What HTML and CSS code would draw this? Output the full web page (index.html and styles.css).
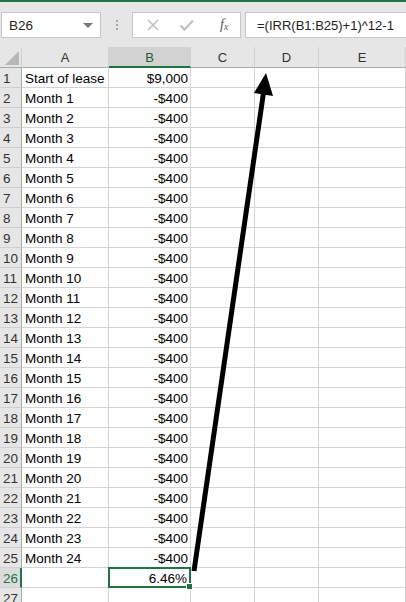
FILE: index.html
```html
<!DOCTYPE html>
<html lang="en">

<head>
    <meta charset="UTF-8">
    <meta name="viewport" content="width=device-width, initial-scale=1">
    <title>Lease IRR</title>
    <link rel="stylesheet" href="styles.css">
</head>

<body>

    <div class="top-edge"></div>

    <!-- Formula bar -->
    <div class="formula-bar">
        <div class="name-box">
            <span>B26</span>
            <svg class="caret" width="10" height="6" viewBox="0 0 10 6"><polygon points="0,0 10,0 5,5" fill="#777"/></svg>
        </div>
        <div class="grip"><i></i><i></i><i></i></div>
        <div class="fx-box">
            <svg width="14" height="14" viewBox="0 0 14 14"><path d="M2 2 L12 12 M12 2 L2 12" stroke="#c2c2c2" stroke-width="1.6" fill="none"/></svg>
            <svg width="16" height="14" viewBox="0 0 16 14"><path d="M1.5 7.5 L5.5 11.5 L14 2.5" stroke="#c2c2c2" stroke-width="2.4" fill="none"/></svg>
            <span class="fx">f<sub>x</sub></span>
        </div>
        <div class="formula">=(IRR(B1:B25)+1)^12-1</div>
    </div>

    <!-- Sheet -->
    <div class="sheet" id="sheet">
        <div class="corner"><svg width="14" height="14" viewBox="0 0 14 14"><polygon points="14,0 14,14 0,14" fill="#b7b7b7"/></svg></div>
        <div class="col-head">A</div>
        <div class="col-head active">B</div>
        <div class="col-head">C</div>
        <div class="col-head">D</div>
        <div class="col-head">E</div>
    </div>

    <svg class="arrow" width="406" height="602" viewBox="0 0 406 602">
        <line x1="194" y1="571" x2="263.6" y2="92" stroke="#000" stroke-width="5"/>
        <polygon points="266,73 273,96 254,93" fill="#000"/>
    </svg>

    <script>
        // Build the lease rows
        const sheet = document.getElementById("sheet");
        const rows = [["Start of lease", "$9,000"]];
        for (let i = 1; i <= 24; i++) {
            rows.push(["Month " + i, "-$400"]);
        }
        rows.push(["", "6.46%"]);
        rows.push(["", ""]);

        rows.forEach((row, i) => {
            const n = i + 1;
            const selected = n === 26;
            let html = `<div class="row-head${selected ? " active" : ""}">${n}</div>`;
            html += `<div class="cell">${row[0]}</div>`;
            html += `<div class="cell num${selected ? " selected" : ""}">${row[1]}</div>`;
            html += `<div class="cell"></div><div class="cell"></div><div class="cell"></div>`;
            sheet.insertAdjacentHTML("beforeend", html);
        });
    </script>

</body>

</html>
```

FILE: styles.css
```css
/* Spreadsheet view */
body {
    margin: 0;
    padding: 0;
    background-color: #e6e6e6;
    font-family: 'Liberation Sans', Arial, sans-serif;
    color: #000;
    width: 406px;
    height: 602px;
    overflow: hidden;
    position: relative;
}

.top-edge {
    height: 2px;
    background-color: #217346;
}

/* Formula bar */
.formula-bar {
    display: flex;
    align-items: center;
    height: 26px;
    margin-top: 10px;
    margin-bottom: 9px;
}

.name-box {
    width: 100px;
    height: 26px;
    box-sizing: border-box;
    margin-left: 1px;
    background-color: #fff;
    border: 1px solid #c6c6c6;
    display: flex;
    align-items: center;
    justify-content: space-between;
    padding: 0 7px 0 7px;
    font-size: 13.5px;
    color: #222;
}

.caret {
    margin-top: 1px;
}

.grip {
    width: 31px;
    display: flex;
    flex-direction: column;
    align-items: center;
    gap: 2px;
}

.grip i {
    width: 2px;
    height: 2px;
    background-color: #a8a8a8;
}

.fx-box {
    width: 109px;
    height: 26px;
    box-sizing: border-box;
    background-color: #fff;
    border: 1px solid #c6c6c6;
    display: flex;
    align-items: center;
    padding-left: 13px;
    gap: 19px;
}

.fx {
    font-family: 'Liberation Serif', 'Times New Roman', serif;
    font-style: italic;
    font-size: 14px;
    color: #555;
    margin-left: 6px;
}

.fx sub {
    font-size: 10px;
    vertical-align: -1px;
}

.formula {
    flex: 1;
    height: 26px;
    box-sizing: border-box;
    margin-left: 4px;
    background-color: #fff;
    border: 1px solid #c6c6c6;
    border-right: none;
    display: flex;
    align-items: center;
    padding-left: 11px;
    font-size: 13px;
    color: #222;
}

/* Grid */
.sheet {
    display: grid;
    grid-template-columns: 22px 87px 82px 64px 64px 1fr;
    grid-template-rows: 21px;
    grid-auto-rows: 20px;
    background-color: #fff;
}

.corner,
.col-head {
    background-color: #e6e6e6;
    border-right: 1px solid #d0d0d0;
    border-bottom: 1px solid #ababab;
    box-sizing: border-box;
}

.corner {
    display: flex;
    align-items: flex-end;
    justify-content: flex-end;
    padding: 0 2px 2px 0;
}

.col-head {
    display: flex;
    align-items: center;
    justify-content: center;
    font-size: 13px;
    color: #333;
    padding-top: 1px;
}

.col-head.active {
    background-color: #d2d2d2;
    border-bottom: 2px solid #217346;
    color: #1e5b38;
}

.row-head {
    background-color: #e6e6e6;
    border-right: 1px solid #ababab;
    border-bottom: 1px solid #d0d0d0;
    box-sizing: border-box;
    display: flex;
    align-items: flex-end;
    padding: 0 0 1px 3px;
    font-size: 13.5px;
    color: #333;
}

.row-head.active {
    background-color: #dcdcdc;
    border-right: 2px solid #217346;
    color: #217346;
}

.cell {
    border-right: 1px solid #d4d4d4;
    border-bottom: 1px solid #d4d4d4;
    box-sizing: border-box;
    display: flex;
    align-items: flex-end;
    padding: 0 2px 1px 3px;
    font-size: 13.5px;
    white-space: nowrap;
}

.cell.num {
    justify-content: flex-end;
    padding-right: 2px;
}

.cell.selected {
    position: relative;
    border: 2px solid #217346;
    margin: -1px 0 0 -1px;
    padding-bottom: 0;
}

.cell.selected::after {
    content: "";
    position: absolute;
    right: -4px;
    bottom: -4px;
    width: 5px;
    height: 5px;
    background-color: #217346;
    border: 1px solid #fff;
}

/* Arrow drawn over the sheet */
.arrow {
    position: absolute;
    top: 0;
    left: 0;
    pointer-events: none;
}
```
